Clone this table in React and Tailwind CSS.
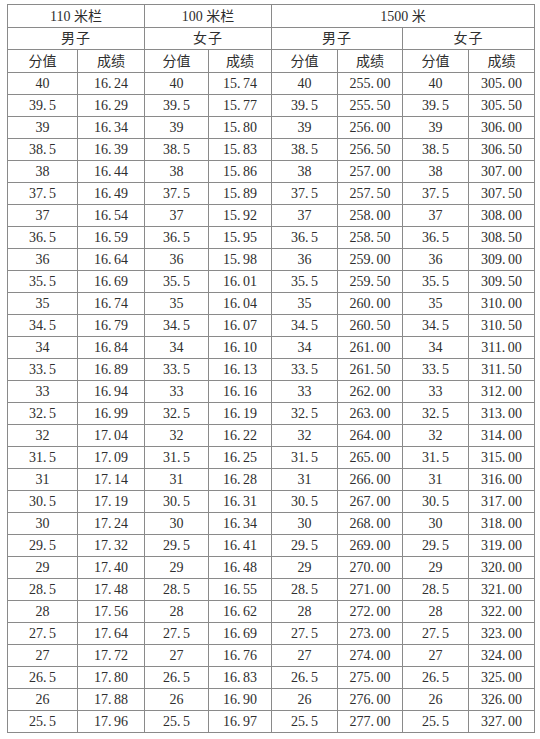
import React from "react";

const men110 = ["16.24","16.29","16.34","16.39","16.44","16.49","16.54","16.59","16.64","16.69","16.74","16.79","16.84","16.89","16.94","16.99","17.04","17.09","17.14","17.19","17.24","17.32","17.40","17.48","17.56","17.64","17.72","17.80","17.88","17.96"];
const women100 = ["15.74","15.77","15.80","15.83","15.86","15.89","15.92","15.95","15.98","16.01","16.04","16.07","16.10","16.13","16.16","16.19","16.22","16.25","16.28","16.31","16.34","16.41","16.48","16.55","16.62","16.69","16.76","16.83","16.90","16.97"];
const men1500 = ["255.00","255.50","256.00","256.50","257.00","257.50","258.00","258.50","259.00","259.50","260.00","260.50","261.00","261.50","262.00","263.00","264.00","265.00","266.00","267.00","268.00","269.00","270.00","271.00","272.00","273.00","274.00","275.00","276.00","277.00"];
const women1500 = ["305.00","305.50","306.00","306.50","307.00","307.50","308.00","308.50","309.00","309.50","310.00","310.50","311.00","311.50","312.00","313.00","314.00","315.00","316.00","317.00","318.00","319.00","320.00","321.00","322.00","323.00","324.00","325.00","326.00","327.00"];

const rows = men110.map((m, i) => ({
  score: String(40 - i * 0.5),
  cells: [m, women100[i], men1500[i], women1500[i]],
}));

const widths = ["w-[70px]", "w-[67px]", "w-[64px]", "w-[63px]", "w-[66px]", "w-[65px]", "w-[66px]", "w-[66px]"];

// the scanned font sets the dot as wide as a digit
function Num({ value }) {
  const [a, b] = value.split(".");
  if (b === undefined) return <span>{a}</span>;
  return (
    <span>
      {a}
      <span className="inline-block w-[0.42em] text-left">.</span>
      {b}
    </span>
  );
}

const cell = "border border-[#8a8a8a] text-center align-middle p-0";

export default function App() {
  return (
    <div className="min-h-screen bg-white pt-[4px] pl-[7px] text-[#2e2e2e] text-[14px] font-['Liberation_Serif','Noto_Sans_CJK_SC',serif]">
      <table className="table-fixed border-collapse w-[527px] border border-[#666]">
        <colgroup>
          {widths.map((w, i) => (
            <col key={i} className={w} />
          ))}
        </colgroup>
        <thead className="font-normal">
          <tr className="h-[23px]">
            <th colSpan={2} className={cell + " font-normal"}>110 米栏</th>
            <th colSpan={2} className={cell + " font-normal"}>100 米栏</th>
            <th colSpan={4} className={cell + " font-normal"}>1500 米</th>
          </tr>
          <tr className="h-[21px]">
            {["男子", "女子", "男子", "女子"].map((t, i) => (
              <th key={i} colSpan={2} className={cell + " font-normal tracking-[1px]"}>{t}</th>
            ))}
          </tr>
          <tr className="h-[23px]">
            {[0, 1, 2, 3].map((i) => (
              <React.Fragment key={i}>
                <th className={cell + " font-normal"}>分值</th>
                <th className={cell + " font-normal"}>成绩</th>
              </React.Fragment>
            ))}
          </tr>
        </thead>
        <tbody>
          {rows.map((r) => (
            <tr key={r.score} className="h-[22px]">
              {r.cells.map((c, j) => (
                <React.Fragment key={j}>
                  <td className={cell}><Num value={r.score} /></td>
                  <td className={cell}><Num value={c} /></td>
                </React.Fragment>
              ))}
            </tr>
          ))}
        </tbody>
      </table>
    </div>
  );
}
